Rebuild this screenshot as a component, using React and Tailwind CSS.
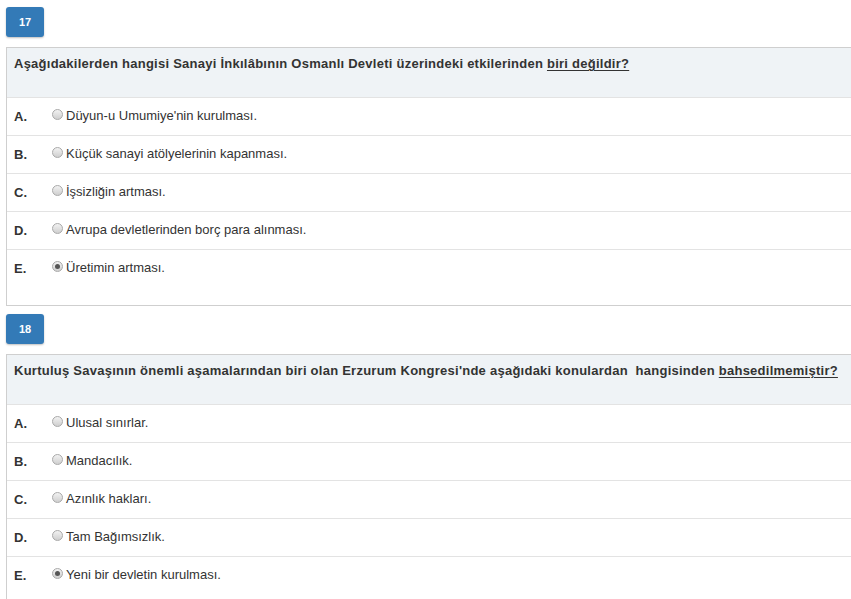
import React from "react";

const questions = [
  {
    no: 17,
    text: "Aşağıdakilerden hangisi Sanayi İnkılâbının Osmanlı Devleti üzerindeki etkilerinden ",
    mark: "biri değildir?",
    options: [
      "Düyun-u Umumiye'nin kurulması.",
      "Küçük sanayi atölyelerinin kapanması.",
      "İşsizliğin artması.",
      "Avrupa devletlerinden borç para alınması.",
      "Üretimin artması.",
    ],
    selected: 4,
  },
  {
    no: 18,
    text: "Kurtuluş Savaşının önemli aşamalarından biri olan Erzurum Kongresi'nde aşağıdaki konulardan\u00a0 hangisinden ",
    mark: "bahsedilmemiştir?",
    options: [
      "Ulusal sınırlar.",
      "Mandacılık.",
      "Azınlık hakları.",
      "Tam Bağımsızlık.",
      "Yeni bir devletin kurulması.",
    ],
    selected: 4,
  },
];

const letters = ["A.", "B.", "C.", "D.", "E."];

function Radio({ checked }) {
  return (
    <span className="flex h-[11px] w-[11px] shrink-0 items-center justify-center rounded-full border border-[#a9a9a9] bg-gradient-to-b from-[#f2f2f2] to-[#cfcfcf]">
      {checked && <span className="h-[5px] w-[5px] rounded-full bg-[#555]" />}
    </span>
  );
}

function Question({ q, first }) {
  return (
    <div className={first ? "pt-[7px]" : "pt-[8px]"}>
      <div className="flex h-[30px] w-[38px] items-center justify-center rounded-[3px] bg-[#337ab7] text-[11px] font-bold text-white shadow-[0_1px_2px_rgba(0,0,0,0.25)]">
        {q.no}
      </div>
      <div className="mt-[10px] mr-[-20px] border border-[#cfcfcf] bg-white">
        <div className="h-[49px] bg-[#eff3f6] px-[7px] pt-[8px] text-[13px] font-bold leading-[16px] tracking-[0.25px] text-[#333]">
          {q.text}
          <span className="underline decoration-1 underline-offset-2">{q.mark}</span>
        </div>
        {q.options.map((opt, i) => (
          <div
            key={i}
            className={
              "flex border-t border-[#e3e3e3] pl-[7px] pt-[11px] " +
              (i === 4 ? "h-[56px]" : "h-[38px]")
            }
          >
            <span className="w-[38px] shrink-0 text-[13px] font-bold leading-[16px] text-[#333]">
              {letters[i]}
            </span>
            <Radio checked={i === q.selected} />
            <span className="ml-[3px] text-[13px] leading-[14px] text-[#333]">{opt}</span>
          </div>
        ))}
      </div>
    </div>
  );
}

export default function App() {
  return (
    <div className="h-[599px] w-[851px] overflow-hidden bg-white pl-[6px] font-['Liberation_Sans',Arial,sans-serif]">
      {questions.map((q, i) => (
        <Question key={q.no} q={q} first={i === 0} />
      ))}
    </div>
  );
}
